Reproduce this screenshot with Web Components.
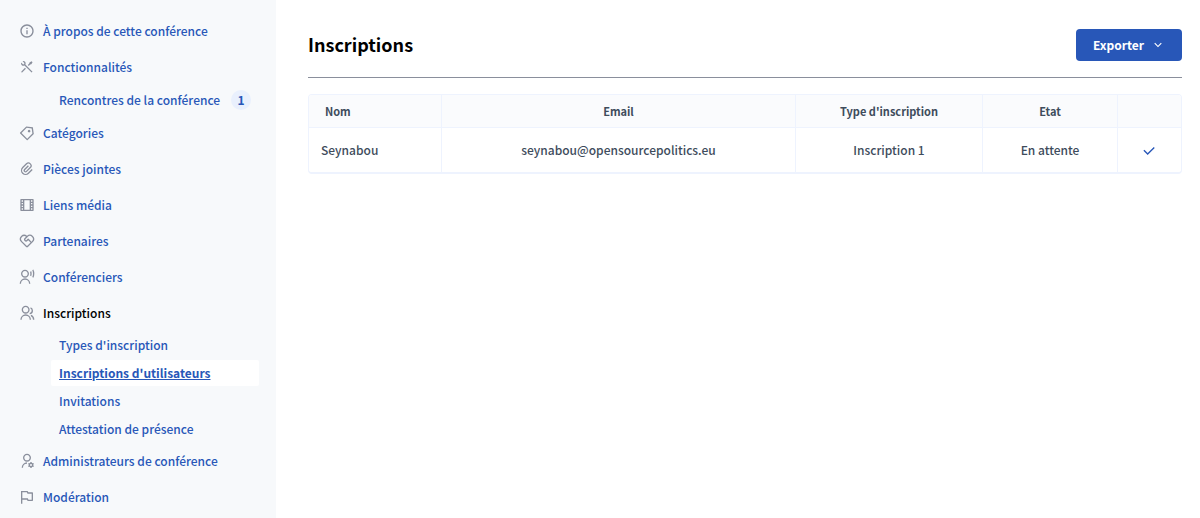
<!DOCTYPE html>
<html lang="fr">
<head>
<meta charset="utf-8">
<meta name="viewport" content="width=device-width, initial-scale=1">
<title>Inscriptions</title>
<style>
  body {
    margin: 0;
    font: 500 12px/20px "Noto Sans CJK JP", "Noto Sans", sans-serif;
    color: #3e4c5c;
    background: #fff;
    --primary: #2857b8;
    --muted: #8a8f9c;
    --line: #eef3fe;
  }
</style>
</head>
<body>
<admin-shell>
  <side-nav slot="nav">
    <nav-item icon="info" label="À propos de cette conférence"></nav-item>
    <nav-item icon="tools" label="Fonctionnalités">
      <nav-subitem roomy count="1" label="Rencontres de la conférence"></nav-subitem>
    </nav-item>
    <nav-item icon="tag" label="Catégories"></nav-item>
    <nav-item icon="clip" label="Pièces jointes"></nav-item>
    <nav-item icon="film" label="Liens média"></nav-item>
    <nav-item icon="heart" label="Partenaires"></nav-item>
    <nav-item icon="voice" label="Conférenciers"></nav-item>
    <nav-item icon="group" label="Inscriptions" current>
      <nav-subitem label="Types d'inscription"></nav-subitem>
      <nav-subitem label="Inscriptions d'utilisateurs" active></nav-subitem>
      <nav-subitem label="Invitations"></nav-subitem>
      <nav-subitem label="Attestation de présence"></nav-subitem>
    </nav-item>
    <nav-item icon="admin" label="Administrateurs de conférence"></nav-item>
    <nav-item icon="flag" label="Modération"></nav-item>
  </side-nav>
  <page-header>
    Inscriptions
    <export-button slot="action">Exporter</export-button>
  </page-header>
  <registration-table></registration-table>
</admin-shell>

<script>
const ICONS = {
  info: "M12 22C6.477 22 2 17.523 2 12S6.477 2 12 2s10 4.477 10 10-4.477 10-10 10zm0-2a8 8 0 1 0 0-16 8 8 0 0 0 0 16zM11 7h2v2h-2V7zm0 4h2v6h-2v-6z",
  tools: "M5.329 3.272a3.5 3.5 0 0 1 4.255 4.962L20.293 18.944l-1.414 1.414L8.17 9.649a3.5 3.5 0 0 1-4.963-4.256L5.444 7.63a1.5 1.5 0 1 0 2.121-2.121L5.329 3.272zm10.368 1.883l3.182-1.768 1.414 1.415-1.768 3.182-1.768.353-2.121 2.121-1.414-1.414 2.121-2.121.354-1.768zm-6.718 8.132l1.414 1.414-5.303 5.303a1 1 0 0 1-1.492-1.327l.078-.087 5.303-5.303z",
  tag: "M10.9 2.1l9.899 1.415 1.414 9.9-9.192 9.192a1 1 0 0 1-1.414 0l-9.9-9.9a1 1 0 0 1 0-1.414L10.9 2.1zm.707 2.122L3.828 12l8.486 8.485 7.778-7.778-1.06-7.425-7.425-1.06zm2.12 6.364a2 2 0 1 1 2.83-2.829 2 2 0 0 1-2.83 2.829z",
  clip: "M14.828 7.757l-5.656 5.657a1 1 0 1 0 1.414 1.414l5.657-5.656A3 3 0 1 0 12 4.929l-5.657 5.657a5 5 0 1 0 7.071 7.07L19.071 12l1.414 1.414-5.657 5.657a7 7 0 1 1-9.9-9.9l5.658-5.656a5 5 0 0 1 7.07 7.07L12 16.244A3 3 0 1 1 7.757 12l5.657-5.657 1.414 1.414z",
  film: "M2 3.993A1 1 0 0 1 2.992 3h18.016c.548 0 .992.445.992.993v16.014a1 1 0 0 1-.992.993H2.992A.993.993 0 0 1 2 20.007V3.993zM8 5v14h8V5H8zM4 5v2h2V5H4zm14 0v2h2V5h-2zM4 9v2h2V9H4zm14 0v2h2V9h-2zM4 13v2h2v-2H4zm14 0v2h2v-2h-2zM4 17v2h2v-2H4zm14 0v2h2v-2h-2z",
  heart: "M3.161 4.469a6.5 6.5 0 0 1 8.84-.328 6.5 6.5 0 0 1 9.178 9.154l-7.765 7.79a2 2 0 0 1-2.719.102l-.11-.101-7.764-7.791a6.5 6.5 0 0 1 .34-8.826zm1.414 1.414a4.5 4.5 0 0 0-.146 6.21l.146.154L12 19.672l5.303-5.304-3.535-3.535-1.06 1.06a3 3 0 1 1-4.244-4.242l2.102-2.103a4.501 4.501 0 0 0-5.837.189l-.154.146zm8.486 2.828a1 1 0 0 1 1.414 0l4.242 4.242.708-.706a4.5 4.5 0 0 0-6.211-6.51l-.153.146-3.182 3.182a1 1 0 0 0-.078 1.327l.078.087a1 1 0 0 0 1.327.078l.087-.078 1.768-1.768z",
  voice: "M1 22a8 8 0 1 1 16 0h-2a6 6 0 1 0-12 0H1zm8-9c-3.315 0-6-2.685-6-6s2.685-6 6-6 6 2.685 6 6-2.685 6-6 6zm0-2c2.21 0 4-1.79 4-4s-1.79-4-4-4-4 1.79-4 4 1.79 4 4 4zM21.548.784A13.942 13.942 0 0 1 23 7c0 2.233-.523 4.344-1.452 6.216l-1.645-1.196A11.955 11.955 0 0 0 21 7c0-1.792-.393-3.493-1.097-5.02L21.548.784zm-3.302 2.4A9.97 9.97 0 0 1 19 7a9.97 9.97 0 0 1-.754 3.816l-1.677-1.22A7.99 7.99 0 0 0 17 7a7.99 7.99 0 0 0-.43-2.596l1.676-1.22z",
  group: "M2 22a8 8 0 1 1 16 0h-2a6 6 0 1 0-12 0H2zm8-9c-3.315 0-6-2.685-6-6s2.685-6 6-6 6 2.685 6 6-2.685 6-6 6zm0-2c2.21 0 4-1.79 4-4s-1.79-4-4-4-4 1.79-4 4 1.79 4 4 4zm8.284 3.703A8.002 8.002 0 0 1 23 22h-2a6.001 6.001 0 0 0-3.537-5.473l.82-1.824zm-.688-11.29A5.5 5.5 0 0 1 21 8.5a5.499 5.499 0 0 1-5 5.478v-2.013a3.5 3.5 0 0 0 1.041-6.609l.555-1.943z",
  admin: "M12 14v2a6 6 0 0 0-6 6H4a8 8 0 0 1 8-8zm0-1c-3.315 0-6-2.685-6-6s2.685-6 6-6 6 2.685 6 6-2.685 6-6 6zm0-2c2.21 0 4-1.79 4-4s-1.79-4-4-4-4 1.79-4 4 1.79 4 4 4zm2.595 7.812a3.51 3.51 0 0 1 0-1.623l-.992-.573 1-1.732.992.573A3.496 3.496 0 0 1 17 14.645V13.5h2v1.145c.532.158 1.012.44 1.405.812l.992-.573 1 1.732-.992.573a3.51 3.51 0 0 1 0 1.622l.992.573-1 1.732-.992-.573a3.496 3.496 0 0 1-1.405.812V22.5h-2v-1.145a3.496 3.496 0 0 1-1.405-.812l-.992.573-1-1.732.992-.572zM18 19.5a1.5 1.5 0 1 0 0-3 1.5 1.5 0 0 0 0 3z",
  flag: "M5 16v6H3V3h9.382a1 1 0 0 1 .894.553L14 5h6a1 1 0 0 1 1 1v11a1 1 0 0 1-1 1h-6.382a1 1 0 0 1-.894-.553L12 16H5zM5 5v9h8.236l1 2H19V7h-6.236l-1-2H5z",
  check: "M10 15.172l9.192-9.193 1.415 1.414L10 18l-6.364-6.364 1.414-1.414z",
  down: "M12 13.172l4.95-4.95 1.414 1.414L12 16 5.636 9.636 7.05 8.222z"
};

class BaseElement extends HTMLElement {
  constructor() {
    super();
    this.attachShadow({ mode: "open" });
  }
  connectedCallback() {
    this.shadowRoot.innerHTML = this.render();
  }
}

customElements.define("ui-icon", class extends BaseElement {
  render() {
    return `<style>
      :host { display: block; flex: none; width: var(--icon-size, 16px); height: var(--icon-size, 16px); }
      svg { display: block; width: 100%; height: 100%; fill: currentColor; }
    </style>
    <svg viewBox="0 0 24 24" aria-hidden="true"><path d="${ICONS[this.getAttribute("name")]}"/></svg>`;
  }
});

customElements.define("admin-shell", class extends BaseElement {
  render() {
    return `<style>
      :host { display: grid; grid-template-columns: 276px minmax(0, 1fr); min-height: 100vh; }
      main { padding: 29px 18px 24px 32px; }
    </style>
    <slot name="nav"></slot>
    <main><slot></slot></main>`;
  }
});

customElements.define("side-nav", class extends BaseElement {
  render() {
    return `<style>
      :host { display: block; background: #f7f9fb; }
      nav { display: flex; flex-direction: column; padding: 13px 17px 0 19px; }
    </style>
    <nav aria-label="Conférence"><slot></slot></nav>`;
  }
});

customElements.define("nav-item", class extends BaseElement {
  render() {
    return `<style>
      :host { display: block; }
      a { display: flex; align-items: center; gap: 8px; height: 36px; color: var(--primary); text-decoration: none; }
      :host([current]) a { color: #000; }
      ui-icon { color: var(--muted); }
      .sub { display: flex; flex-direction: column; padding-left: 32px; }
    </style>
    <a href="#"><ui-icon name="${this.getAttribute("icon")}"></ui-icon><span>${this.getAttribute("label")}</span></a>
    <div class="sub"><slot></slot></div>`;
  }
});

customElements.define("nav-subitem", class extends BaseElement {
  render() {
    const count = this.getAttribute("count");
    return `<style>
      :host { display: block; padding: 1px 0; }
      :host([roomy]) { padding: 2px 0; }
      a { display: flex; align-items: center; gap: 11px; height: 26px; padding-left: 8px; border-radius: 2px; color: var(--primary); text-decoration: none; white-space: nowrap; }
      :host([active]) a { background: #fff; font-weight: 700; text-decoration: underline; }
      .count { width: 20px; height: 20px; border-radius: 50%; background: #e9f0fd; text-align: center; font-weight: 700; }
    </style>
    <a href="#"><span>${this.getAttribute("label")}</span>${count ? `<span class="count">${count}</span>` : ""}</a>`;
  }
});

customElements.define("page-header", class extends BaseElement {
  render() {
    return `<style>
      :host { display: flex; align-items: center; justify-content: space-between; padding-bottom: 16px; border-bottom: 1px solid var(--muted); }
      h1 { margin: 0; padding-bottom: 2px; font-size: 18px; line-height: 24px; font-weight: 700; color: #000; }
    </style>
    <h1><slot></slot></h1><slot name="action"></slot>`;
  }
});

customElements.define("export-button", class extends BaseElement {
  render() {
    return `<style>
      :host { display: block; --icon-size: 14px; }
      button { display: flex; align-items: center; gap: 7px; height: 32px; padding: 0 17px; border: 0; border-radius: 4px; background: var(--primary); color: #fff; font: inherit; font-weight: 700; }
    </style>
    <button type="button" aria-haspopup="menu"><span><slot></slot></span><ui-icon name="down"></ui-icon></button>`;
  }
});

customElements.define("registration-table", class extends BaseElement {
  render() {
    return `<style>
      :host { display: block; margin-top: 16px; border: 1px solid var(--line); border-bottom-width: 2px; border-radius: 4px; overflow: hidden; }
      table { width: 100%; border-collapse: separate; border-spacing: 0; table-layout: fixed; }
      .name { width: 132px; }
      .type { width: 187px; }
      .state { width: 135px; }
      .actions { width: 64px; }
      th, td { box-sizing: border-box; padding: 0 12px; text-align: center; }
      th { height: 33px; background: #fafbfd; border-bottom: 1px solid var(--line); font-size: 11px; font-weight: 700; }
      td { height: 44px; }
      th + th, td + td { border-left: 1px solid var(--line); }
      th:first-child { padding-left: 16px; text-align: left; }
      td:first-child { text-align: left; }
      td:last-child { padding: 2px 14px 0 12px; }
      a { display: flex; justify-content: center; color: var(--primary); --icon-size: 16px; }
    </style>
    <table>
      <colgroup><col class="name"><col><col class="type"><col class="state"><col class="actions"></colgroup>
      <thead><tr><th scope="col">Nom</th><th scope="col">Email</th><th scope="col">Type d'inscription</th><th scope="col">Etat</th><th></th></tr></thead>
      <tbody><tr><td>Seynabou</td><td>seynabou@opensourcepolitics.eu</td><td>Inscription 1</td><td>En attente</td><td><a href="#" aria-label="Valider"><ui-icon name="check"></ui-icon></a></td></tr></tbody>
    </table>`;
  }
});
</script>
</body>
</html>
